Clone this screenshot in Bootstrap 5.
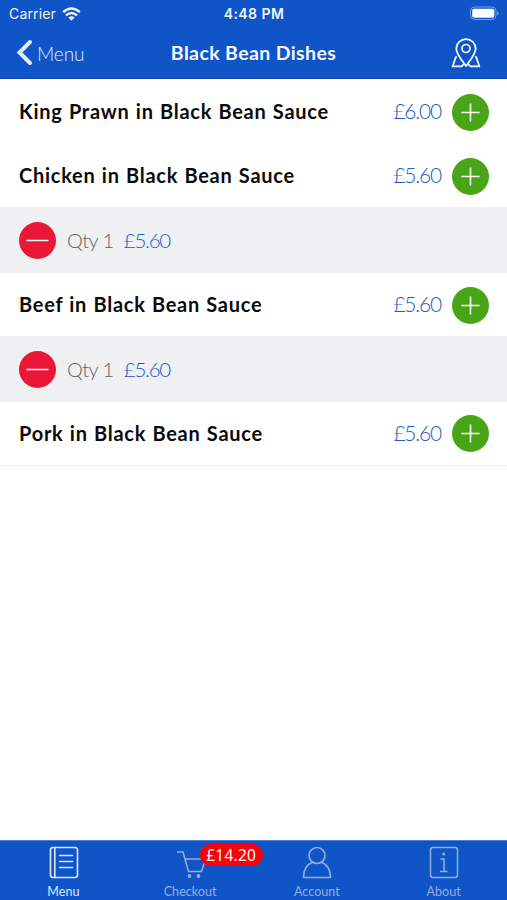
<!DOCTYPE html>
<html lang="en">
<head>
<meta charset="utf-8">
<meta name="viewport" content="width=device-width, initial-scale=1">
<title>Black Bean Dishes</title>
<link href="https://cdn.jsdelivr.net/npm/bootstrap@5.3.0/dist/css/bootstrap.min.css" rel="stylesheet">
<style>
  body { font-family: Lato, "Liberation Sans", sans-serif; line-height: 1; color: #0b0b0b; }
  svg { display: block; flex: none; fill: none; stroke: currentColor; }
  .topbar { background: #0f55c7; height: 79px; border-bottom: 1px solid #0a48b0; }
  .status { height: 27px; padding: 0 8px 0 9px; font: 500 14px/27px Inter, sans-serif; color: #eef4ff; }
  .status .carrier { font-weight: 400; letter-spacing: .15px; width: 48px; }
  .status .clock { letter-spacing: .45px; font-weight: 600; }
  .side { flex: 1 1 0; }
  .titlebar { height: 52px; padding: 0 26px; }
  .back { font-size: 19px; font-weight: 300; color: #e2ecff; letter-spacing: -.1px; }
  .back svg { margin-left: -10px; }
  .heading { font-size: 19.5px; font-weight: 700; letter-spacing: .38px; color: #f3f7ff; }
  .dish { height: 64px; padding: 1px 18px 0 19px; }
  .dish.tall { height: 65px; }
  .dish.short { height: 63px; }
  .dish-name { font-size: 20px; font-weight: 700; letter-spacing: .74px; word-spacing: .7px; padding-bottom: 2px; }
  .price { color: #215bcb; font-size: 21px; font-weight: 300; letter-spacing: -1.2px; }
  .dish .price { margin-right: 11px; padding-bottom: 3px; }
  .qty { height: 66px; background: #eef0f1; padding-left: 19px; font-size: 20px; font-weight: 300; }
  .qty .count { color: #626466; margin: 0 10px 0 11px; letter-spacing: -.5px; }
  .qty .price { font-size: 20.5px; letter-spacing: -1.2px; }
  .round { width: 37px; height: 37px; border-radius: 50%; border: 0; padding: 0; color: #fff; }
  .add { background: #47a516; }
  .remove { background: #ea1737; }
  .dish.last { border-bottom: 1px solid #f0f1f2; padding-top: 0; }
  .tabs { height: 60px; background: #0f55c7; border-top: 1px solid #4d80d5; }
  .tab { flex: 1 1 0; color: #94afdc; font-size: 12.5px; letter-spacing: .05px; text-decoration: none; padding-top: 4px; }
  .tab.active { color: #dbe8ff; }
  .tab svg.nudge { transform: translateX(1px); }
  .tab span.caption { margin-top: 7px; }
  .total { left: 73px; top: 3px; width: 63px; height: 22px; line-height: 22px; border-radius: 12px; background: #fb0006; color: #fff; font-family: "Noto Sans", sans-serif; font-size: 15.5px; letter-spacing: .25px; text-align: center; }
</style>
</head>
<body>
<div class="d-flex flex-column vh-100 bg-white overflow-hidden">
  <header class="topbar flex-shrink-0">
    <div class="status d-flex align-items-center">
      <div class="side d-flex align-items-center">
        <span class="carrier">Carrier</span>
        <svg class="ms-1" width="21" height="16" viewBox="0 0 21 16" stroke-width="2.4"><path d="M2.2 6.2Q10.500 -1.200 18.800 6.200M5 9.400Q10.500 4.500 16 9.400"/><path d="M7.400 11.400Q10.500 9 13.600 11.400L10.500 14.700Z" fill="currentColor" stroke="none"/></svg>
      </div>
      <span class="clock">4:48 PM</span>
      <div class="side d-flex justify-content-end">
        <svg width="30" height="15" viewBox="0 0 30 15"><rect x="1.500" y="1" width="25.500" height="12.500" rx="4" stroke="#769edf"/><rect x="3.200" y="2.700" width="22.100" height="9.100" rx="2" fill="#fff" stroke="none"/><path d="M28 5.200Q31 7.200 28 9.300Z" fill="#769edf" stroke="none"/></svg>
      </div>
    </div>
    <div class="titlebar d-flex align-items-center">
      <a class="back side d-flex align-items-center text-decoration-none" href="#">
        <svg width="21" height="28" viewBox="0 0 21 28" stroke="#fff" stroke-width="4" stroke-linecap="round" stroke-linejoin="miter"><path d="M14 3 3.500 13.500 14 24" /></svg>
        <span>Menu</span>
      </a>
      <h1 class="heading m-0">Black Bean Dishes</h1>
      <div class="side d-flex justify-content-end text-white">
        <svg width="30" height="32" viewBox="0 0 30 32" stroke-width="1.7" stroke-linejoin="round"><path d="M15 29C11.500 24 5.300 17.200 5.300 11.800A9.700 9.700 0 0 1 24.700 11.800C24.700 17.200 18.500 24 15 29Z"/><circle cx="15" cy="11.500" r="4"/><path d="M6 20 4.800 20 1.600 29.400H10.500L13 27M24 20H25.200L28.400 29.400H19.500L17 27"/></svg>
      </div>
    </div>
  </header>

  <main class="flex-grow-1">
    <div class="dish tall d-flex align-items-center">
      <span class="dish-name flex-grow-1">King Prawn in Black Bean Sauce</span><span class="price">£6.00</span>
      <button class="round add" aria-label="Add"><svg width="37" height="37" stroke-width="1.6"><path d="M9.500 18.500h18M18.500 9.500v18"/></svg></button>
    </div>
    <div class="dish short d-flex align-items-center">
      <span class="dish-name flex-grow-1">Chicken in Black Bean Sauce</span><span class="price">£5.60</span>
      <button class="round add" aria-label="Add"><svg width="37" height="37" stroke-width="1.6"><path d="M9.500 18.500h18M18.500 9.500v18"/></svg></button>
    </div>
    <div class="qty d-flex align-items-center">
      <button class="round remove" aria-label="Remove"><svg width="37" height="37" stroke-width="1.500"><path d="M7.500 18.500h22"/></svg></button>
      <span class="count">Qty 1</span><span class="price">£5.60</span>
    </div>
    <div class="dish short d-flex align-items-center">
      <span class="dish-name flex-grow-1">Beef in Black Bean Sauce</span><span class="price">£5.60</span>
      <button class="round add" aria-label="Add"><svg width="37" height="37" stroke-width="1.6"><path d="M9.500 18.500h18M18.500 9.500v18"/></svg></button>
    </div>
    <div class="qty d-flex align-items-center">
      <button class="round remove" aria-label="Remove"><svg width="37" height="37" stroke-width="1.500"><path d="M7.500 18.500h22"/></svg></button>
      <span class="count">Qty 1</span><span class="price">£5.60</span>
    </div>
    <div class="dish last d-flex align-items-center">
      <span class="dish-name flex-grow-1">Pork in Black Bean Sauce</span><span class="price">£5.60</span>
      <button class="round add" aria-label="Add"><svg width="37" height="37" stroke-width="1.6"><path d="M9.500 18.500h18M18.500 9.500v18"/></svg></button>
    </div>
  </main>

  <nav class="tabs d-flex flex-shrink-0">
    <a class="tab active d-flex flex-column align-items-center" href="#">
      <svg class="nudge" width="32" height="34" viewBox="0 0 32 34" stroke-width="1.600" stroke-linecap="round"><rect x="2.500" y="2.500" width="27" height="30" rx="2.500"/><path d="M6.800 2.500v30M11.500 10.500h13M11.500 16.500h13M11.500 22.500h13"/></svg>
      <span class="caption">Menu</span>
    </a>
    <a class="tab position-relative d-flex flex-column align-items-center" href="#">
      <svg class="nudge" width="32" height="34" viewBox="0 0 32 34" stroke-width="1.500" stroke-linejoin="round"><path d="M2 7H8L13.500 26.500H26.500L30.500 14H10"/><circle cx="14.500" cy="31" r="1.900" fill="currentColor" stroke="none"/><circle cx="23.500" cy="31" r="1.900" fill="currentColor" stroke="none"/></svg>
      <span class="caption">Checkout</span>
      <span class="total position-absolute">£14.20</span>
    </a>
    <a class="tab d-flex flex-column align-items-center" href="#">
      <svg width="32" height="34" viewBox="0 0 32 34" stroke-width="1.600" stroke-linejoin="round"><circle cx="16" cy="10.500" r="8"/><path d="M11.500 17.200C5.500 19.500 2.500 24.500 2.500 32.500H29.500C29.500 24.500 26.500 19.500 20.500 17.200"/></svg>
      <span class="caption">Account</span>
    </a>
    <a class="tab d-flex flex-column align-items-center" href="#">
      <svg width="32" height="34" viewBox="0 0 32 34" stroke-width="1.500"><rect x="2.500" y="2.500" width="27" height="30" rx="2.500"/><path d="M12.500 14H16V26.500M12 26.500H19.500"/><circle cx="15.700" cy="9" r="1.500" fill="currentColor" stroke="none"/></svg>
      <span class="caption">About</span>
    </a>
  </nav>
</div>
<script src="https://cdn.jsdelivr.net/npm/bootstrap@5.3.0/dist/js/bootstrap.bundle.min.js"></script>
</body>
</html>
